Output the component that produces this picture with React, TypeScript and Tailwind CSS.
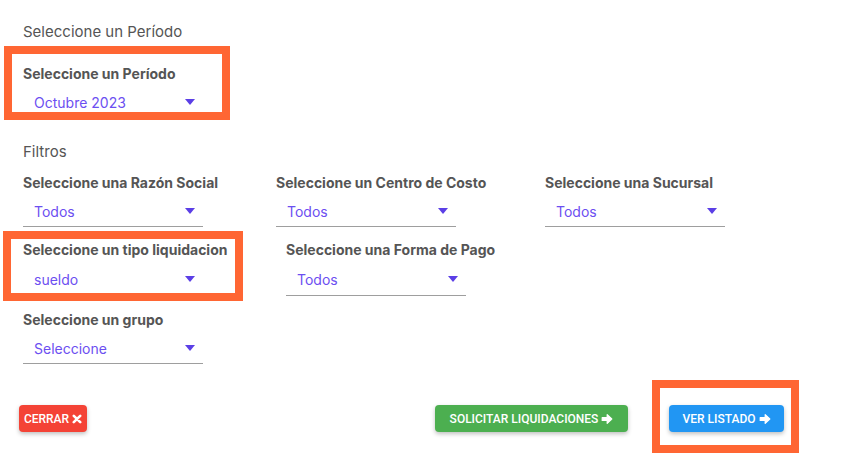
type FieldProps = {
  label: string;
  value: string;
  className?: string;
  tall?: boolean;
};

const Field = ({ label, value, className = "", tall = false }: FieldProps) => {
  return (
    <div className={`flex flex-col shrink-0 ${className}`}>
      <div className="h-[20px] leading-[20px] text-[14px] font-bold text-[#555555] whitespace-nowrap">
        {label}
      </div>
      <div
        className={`relative w-[180px] border-b border-[#9e9e9e] flex items-center pl-[11px] text-[14px] text-[#6c4ff1] ${
          tall ? "mt-[4px] h-[32px]" : "mt-[3px] h-[31px]"
        }`}
      >
        {value}
        <svg
          className="absolute right-[8px] top-[12px]"
          width="10"
          height="6"
          viewBox="0 0 10 6"
        >
          <polygon points="0,0 10,0 5,6" fill="#5b3fe6" />
        </svg>
      </div>
    </div>
  );
};

const ArrowIcon = () => (
  <svg width="12" height="12" viewBox="0 0 12 12" className="shrink-0">
    <path
      d="M1.2 4.6h5V1.6L10.8 6l-4.6 4.4V7.4h-5z"
      fill="currentColor"
      stroke="currentColor"
      strokeWidth="1.2"
      strokeLinejoin="round"
    />
  </svg>
);

const TimesIcon = () => (
  <svg width="10" height="10" viewBox="0 0 10 10" className="shrink-0">
    <path
      d="M1.8 1.8l6.4 6.4M8.2 1.8l-6.4 6.4"
      stroke="currentColor"
      strokeWidth="2.6"
      strokeLinecap="round"
    />
  </svg>
);

const App = () => {
  return (
    <div className="relative w-[841px] h-[468px] bg-white overflow-hidden font-['Inter','Liberation_Sans',sans-serif]">
      <div className="pl-[23px] pt-[22px]">
        <div className="h-[20px] leading-[20px] text-[15px] text-[#555555]">
          Seleccione un Período
        </div>

        <Field className="mt-[22px]" label="Seleccione un Período" value="Octubre 2023" />

        <div className="mt-[24px] h-[20px] leading-[20px] text-[15px] text-[#555555]">
          Filtros
        </div>

        <div className="mt-[11px] flex">
          <Field className="w-[253px]" label="Seleccione una Razón Social" value="Todos" />
          <Field className="w-[269px]" label="Seleccione un Centro de Costo" value="Todos" />
          <Field label="Seleccione una Sucursal" value="Todos" />
        </div>

        <div className="mt-[13px] flex">
          <Field tall className="w-[263px]" label="Seleccione un tipo liquidacion" value="sueldo" />
          <Field tall label="Seleccione una Forma de Pago" value="Todos" />
        </div>

        <Field className="mt-[14px]" label="Seleccione un grupo" value="Seleccione" />
      </div>

      <div className="mt-[41px] pl-[19px] pr-[57px] flex items-center font-['Roboto','Liberation_Sans',sans-serif]">
        <button className="w-[68px] h-[27px] rounded-[4px] bg-[#f44336] text-white text-[12px] font-medium flex items-center justify-center gap-[3px] shadow-[0_2px_4px_rgba(0,0,0,0.25)]">
          CERRAR <TimesIcon />
        </button>
        <button className="ml-auto w-[193px] h-[27px] rounded-[4px] bg-[#4caf50] text-white text-[12px] font-medium flex items-center justify-center gap-[3px] shadow-[0_2px_4px_rgba(0,0,0,0.25)]">
          SOLICITAR LIQUIDACIONES <ArrowIcon />
        </button>
        <button className="ml-[41px] w-[115px] h-[27px] rounded-[4px] bg-[#2196f3] text-white text-[12px] font-medium flex items-center justify-center gap-[3px] shadow-[0_2px_4px_rgba(0,0,0,0.25)]">
          VER LISTADO <ArrowIcon />
        </button>
      </div>

      {/* highlight boxes drawn over the form */}
      <div className="absolute left-[4px] top-[46px] w-[226px] h-[74px] border-[8px] border-[#ff6633] pointer-events-none" />
      <div className="absolute left-[3px] top-[231px] w-[240px] h-[70px] border-[8px] border-[#ff6633] pointer-events-none" />
      <div className="absolute left-[652px] top-[380px] w-[147px] h-[73px] border-[8px] border-[#ff6633] pointer-events-none" />
    </div>
  );
};

export default App;
